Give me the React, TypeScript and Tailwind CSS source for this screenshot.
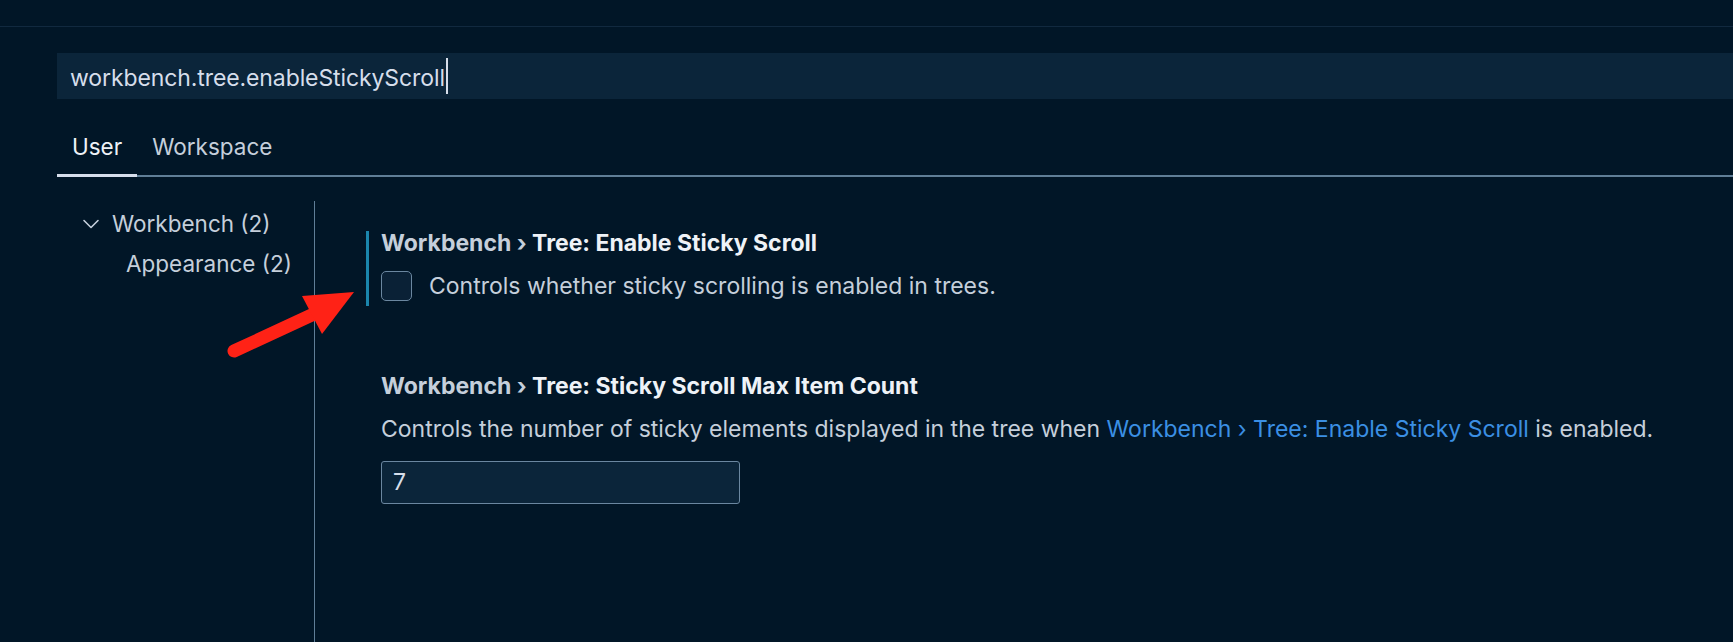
import * as React from 'react';

function Chevron() {
  return (
    <svg width="18" height="12" viewBox="0 0 18 12" fill="none" stroke="#c5cfdb" strokeWidth={1.6} strokeLinecap="round" strokeLinejoin="round">
      <path d="M2 2.5l7 7 7-7" />
    </svg>
  );
}

function Arrow() {
  // red annotation arrow drawn over the page
  return (
    <svg className="absolute left-0 top-0 pointer-events-none" width="1733" height="642" viewBox="0 0 1733 642">
      <line x1="234" y1="351" x2="316" y2="313" stroke="#ff2216" strokeWidth={13} strokeLinecap="round" />
      <polygon points="354,292 302,296 322,334" fill="#ff2216" />
    </svg>
  );
}

export default function App() {
  return (
    <div
      className="relative w-[1733px] h-[642px] overflow-hidden bg-[#011627] text-[#d6deeb]"
      style={{ fontFamily: 'Inter, "Noto Sans", sans-serif' }}
    >
      {/* top separator */}
      <div className="h-[27px] border-b border-[#11293f]" />

      {/* search box */}
      <div className="ml-[57px] mt-[26px] h-[46px] bg-[#0b253a] flex items-center pl-[13px] pt-[4px]">
        <span className="text-[23px] text-[#d6deeb] tracking-[-0.1px]">workbench.tree.enableStickyScroll</span>
        <span className="ml-[1px] -mt-[4px] w-[2px] h-[36px] bg-[#d6deeb]" />
      </div>

      {/* tabs */}
      <div className="ml-[57px] mt-[27px] flex border-b-2 border-[#5f7e97] h-[51px]">
        <div className="px-[15px] pt-[4px] flex items-start text-[22.5px] text-[#eef2f7] border-b-[3px] border-[#d6deeb] -mb-[2px]">
          User
        </div>
        <div className="px-[15px] pt-[4px] flex items-start text-[22.5px] text-[#c5cfdb]">Workspace</div>
      </div>

      {/* body */}
      <div className="flex">
        <div className="w-[257px] ml-[57px] pt-[27px] text-[22.5px]">
          <div className="h-[40px] flex items-center pl-[25px] text-[#c5cfdb]">
            <Chevron />
            <span className="ml-[12px]">Workbench (2)</span>
          </div>
          <div className="h-[40px] flex items-center pl-[69px] text-[#c5cfdb]">Appearance (2)</div>
        </div>

        <div className="mt-[24px] h-[500px] border-l border-[#5f7e97] pl-[51px] pt-[30px]">
          {/* setting 1 */}
          <div className="border-l-[3px] border-[#1b86ad] pl-[12px] pb-[5px]">
            <div className="h-[24px] leading-[24px] text-[23px] font-bold whitespace-nowrap">
              <span className="text-[#c5cfdb]">Workbench › </span>
              <span className="text-[#eef2f7]">Tree: Enable Sticky Scroll</span>
            </div>
            <div className="mt-[16px] h-[30px] flex items-center">
              <div className="w-[31px] h-[30px] rounded-[5px] border-[1.5px] border-[#6b87a0] bg-[#0a2136]" />
              <span className="ml-[17px] text-[23px] text-[#c5cfdb] whitespace-nowrap">Controls whether sticky scrolling is enabled in trees.</span>
            </div>
          </div>

          {/* setting 2 */}
          <div className="mt-[68px] border-l-[3px] border-transparent pl-[12px]">
            <div className="h-[24px] leading-[24px] text-[23px] font-bold whitespace-nowrap">
              <span className="text-[#c5cfdb]">Workbench › </span>
              <span className="text-[#eef2f7]">Tree: Sticky Scroll Max Item Count</span>
            </div>
            <div className="mt-[19px] h-[24px] leading-[24px] text-[23px] text-[#c5cfdb] whitespace-nowrap">
              Controls the number of sticky elements displayed in the tree when{' '}
              <span className="text-[#3b8fe3]">Workbench › Tree: Enable Sticky Scroll</span> is enabled.
            </div>
            <div className="mt-[20px] w-[359px] h-[43px] rounded-[3px] border border-[#6b87a0] bg-[#0b253a] flex items-center pl-[11px] text-[23px] text-[#d6deeb]">
              7
            </div>
          </div>
        </div>
      </div>

      <Arrow />
    </div>
  );
}
